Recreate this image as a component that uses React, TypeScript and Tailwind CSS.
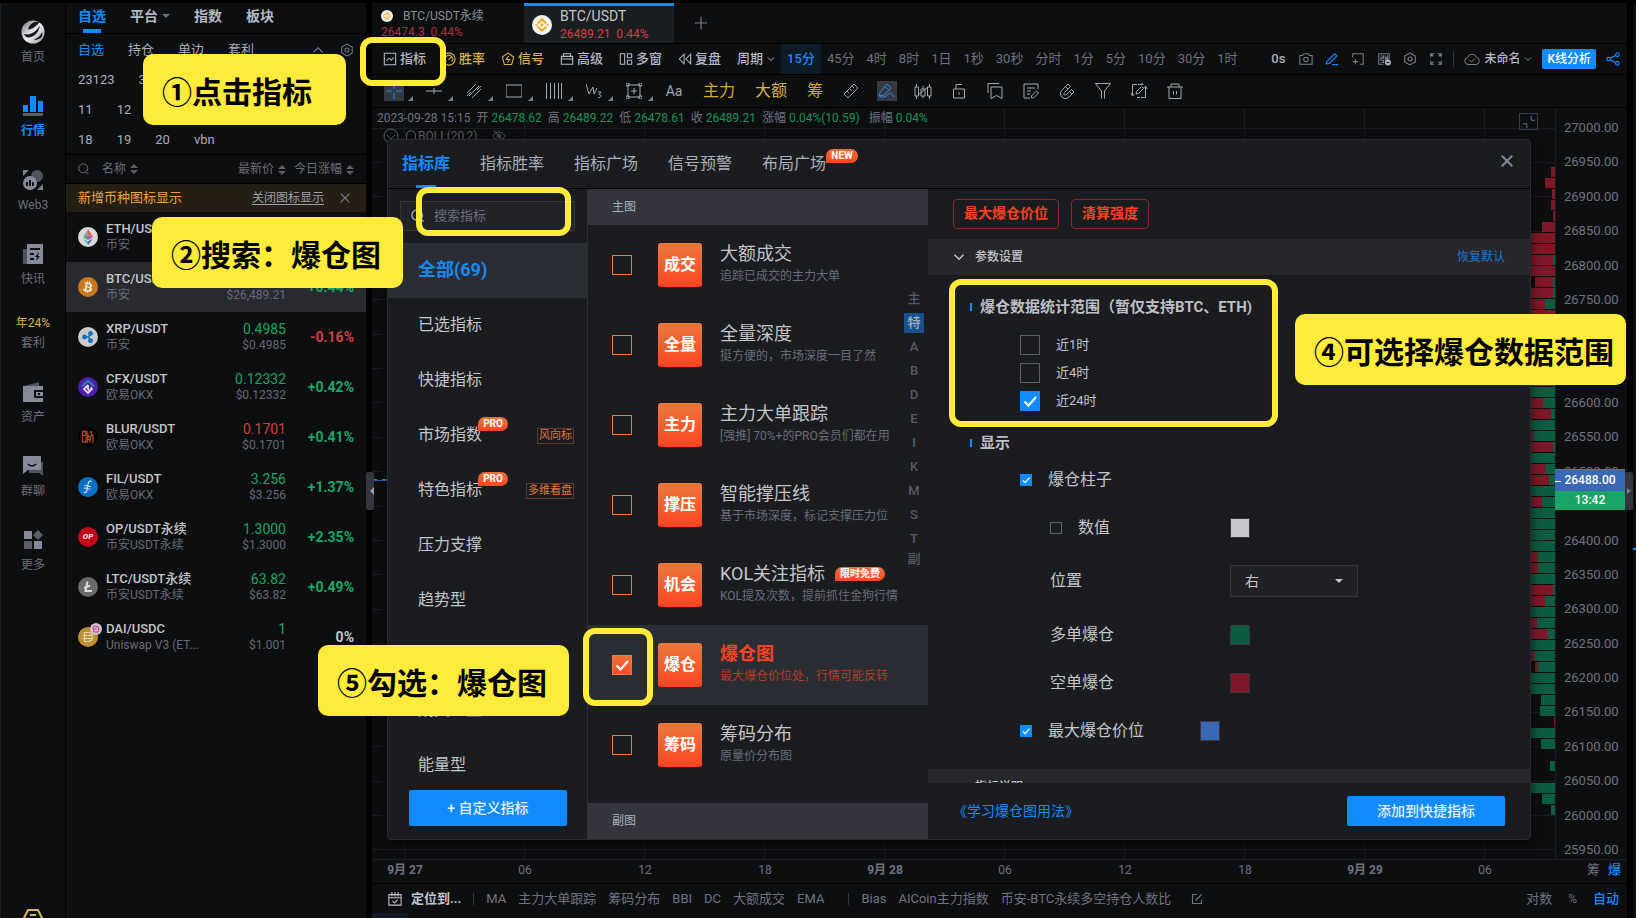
import React from "react";
import { FaBtc } from "react-icons/fa";

type Kids = { children?: React.ReactNode };

function Ico({ s = 16, c = "", w = 1, children }: Kids & { s?: number; c?: string; w?: number }) {
  return (
    <svg width={s} height={s} viewBox="0 0 16 16" fill="none" stroke="currentColor" strokeWidth={w} className={`shrink-0 ${c}`} aria-hidden="true">
      {children}
    </svg>
  );
}

function Chevron({ c = "", s = 10, w = 2 }: { c?: string; s?: number; w?: number }) {
  return <Ico s={s} c={c} w={w}><path d="M2 5l6 6 6-6" /></Ico>;
}

const HexIcon = () => (
  <>
    <path d="M8 1.2l6 3.4v6.8l-6 3.4-6-3.4V4.600z" />
    <circle cx="8" cy="8" r="2.300" />
  </>
);

function Tick({ size, label, checked, tone = "blue" }: { size: "lg" | "sm"; label?: string; checked?: boolean; tone?: "blue" | "orange" }) {
  const dim = size === "lg" ? "size-5" : "size-3";
  const col =
    tone === "blue"
      ? "border-[#5c5e6b] checked:border-[#118bff] checked:bg-[#118bff]"
      : "border-[#ee7b3c] checked:bg-linear-to-b checked:from-[#ee6e39] checked:to-[#fb4a26]";
  return (
    <span className={`grid shrink-0 ${dim}`}>
      <input type="checkbox" defaultChecked={checked} aria-label={label} className={`peer col-start-1 row-start-1 appearance-none border ${dim} ${col}`} />
      <svg viewBox="0 0 20 20" className={`pointer-events-none invisible col-start-1 row-start-1 peer-checked:visible ${dim}`} fill="none" stroke="#fff" strokeWidth="2" aria-hidden="true">
        <path d="M4.500 10.500l4 4 7.500-8.500" />
      </svg>
    </span>
  );
}

/* ---------- left rail ---------- */

const railIcons: Record<string, React.ReactNode> = {
  首页: (
    <svg width="24" height="24" viewBox="0 0 26 26" aria-hidden="true">
      <defs>
        <linearGradient id="ball" x1="0" y1="0" x2="1" y2="1">
          <stop offset="0" stopColor="#6f6f73" />
          <stop offset="0.5" stopColor="#ededf0" />
          <stop offset="1" stopColor="#9a9a9e" />
        </linearGradient>
      </defs>
      <circle cx="13" cy="13" r="12.500" fill="url(#ball)" />
      <path d="M8 9c1-4 5-7 9-7.500 1 0 2 .5 2.500 1C18 6 13 9 10 10c-2 .5-2.500 0-2-1z" fill="#17181a" />
      <path d="M3.500 15c5 2 12-1 17-9-1 7-6 13-13 13-2 0-4-2-4-4z" fill="#17181a" />
      <path d="M14 21c4-1 7-4 9-8 .5 2 0 5-1 6-2 2-5 3-8 2z" fill="#17181a" />
    </svg>
  ),
  行情: (
    <svg width="20" height="20" viewBox="0 0 20 20" aria-hidden="true">
      <path d="M0 9h5v7H0zM7 0h6v16H7zM15 5h5v11h-5z" fill="#118bff" />
      <path d="M0 17h20v3H0z" fill="#5b5e68" />
    </svg>
  ),
  Web3: (
    <svg width="20" height="20" viewBox="0 0 20 20" aria-hidden="true">
      <circle cx="14" cy="6" r="6" fill="#4f535d" />
      <path d="M0 0h6L0 6zM20 20h-6l6-6z" fill="#7b8093" />
      <circle cx="7" cy="13" r="7" fill="#868b9c" />
      <path d="M3 12h2v4H3zM6 10h2v6H6zM9 12h2v4H9z" fill="#17181a" />
    </svg>
  ),
  快讯: (
    <svg width="20" height="20" viewBox="0 0 20 20" aria-hidden="true">
      <path d="M0 5h4v15H0z" fill="#4f535d" />
      <path d="M4 0h16v20H4z" fill="#868b9c" />
      <path d="M7 5h10M7 10h4M7 15h4" stroke="#0d0e10" strokeWidth="2" />
      <path d="M16 8l-4 5h2l-1 4 4-5h-2z" fill="#0d0e10" />
    </svg>
  ),
  资产: (
    <svg width="20" height="20" viewBox="0 0 20 20" aria-hidden="true">
      <path d="M1 4L16 0v4z" fill="#4f535d" />
      <path d="M0 4h20v16H0z" fill="#868b9c" />
      <path d="M11 8h9v8h-9z" fill="#0d0e10" />
      <path d="M13 10h7v4h-7z" fill="#868b9c" />
      <path d="M15 11h2v2h-2z" fill="#0d0e10" />
    </svg>
  ),
  群聊: (
    <svg width="20" height="20" viewBox="0 0 20 20" aria-hidden="true">
      <path d="M6 6h14v14l-4-3H6z" fill="#4f535d" />
      <path d="M0 0h18v14H5l-5 4z" fill="#868b9c" />
      <path d="M5 8c2 2.500 6 2.500 8 0" stroke="#0d0e10" strokeWidth="1.500" fill="none" />
    </svg>
  ),
  更多: (
    <svg width="24" height="24" viewBox="-2 -2 24 24" aria-hidden="true">
      <path d="M1 1h8v8H1zM11 11h8v8h-8z" fill="#868b9c" />
      <path d="M1 11h8v8H1zM15 0l5 5-5 5-5-5z" fill="#5b5e68" />
    </svg>
  ),
};

const rail = ["首页", "行情", "Web3", "快讯", "套利", "资产", "群聊", "更多"];

function Rail() {
  return (
    <nav className="flex w-[65px] shrink-0 flex-col items-center border-l border-[#1c2029] bg-[#0d0e10] pt-4">
      {rail.map((n) => (
        <a key={n} href="#" className={`flex w-full shrink-0 flex-col items-center text-xs leading-5 ${n === "套利" ? "h-16" : "h-[74px]"} ${n === "行情" ? "font-bold text-[#118bff]" : "text-[#6a6e7d]"}`}>
          {n === "套利" ? (
            <span className="mb-[2px] leading-4 text-[#d9b44a]">年24%</span>
          ) : (
            <span className="mb-[2px] flex h-[26px] items-center">{railIcons[n]}</span>
          )}
          {n}
        </a>
      ))}
      <span className="mt-auto h-[9px] overflow-hidden">
        <svg width="20" height="20" viewBox="0 0 20 20" fill="none" stroke="#dcb25c" strokeWidth="2" aria-hidden="true">
          <path d="M5 1h10l4 8-4 8H5L1 9zM7 6h6" />
        </svg>
      </span>
    </nav>
  );
}

/* ---------- watch list ---------- */

function Coin({ k }: { k: string }) {
  const wrap = (bg: string, inner: React.ReactNode) => (
    <svg width="20" height="20" viewBox="0 0 20 20" aria-hidden="true">
      <circle cx="10" cy="10" r="10" fill={bg} />
      {inner}
    </svg>
  );
  switch (k) {
    case "ETH":
      return wrap("#d9d9dc", <>
        <path d="M10 2L5 10l5-2z" fill="#8a9be0" /><path d="M10 2l5 8-5-2z" fill="#e0603c" />
        <path d="M5 10l5-2v5z" fill="#4aa96a" /><path d="M15 10l-5-2v5z" fill="#b356a8" />
        <path d="M5 11.500l5 3V18z" fill="#3ab4c8" /><path d="M15 11.500l-5 3V18z" fill="#3f62b8" />
      </>);
    case "BTC":
      return (
        <span className="flex size-5 items-center justify-center rounded-full bg-[#c9771d] text-[#e8e4dc]">
          <FaBtc size={12} className="rotate-12" />
        </span>
      );
    case "XRP":
      return wrap("#c9cacc", <>
        <path d="M6.500 10h4l2.500-4M10.500 10l2.500 4" stroke="#1173b8" strokeWidth="1.500" fill="none" />
        <circle cx="6.500" cy="10" r="2.400" fill="#1173b8" /><circle cx="12.500" cy="6.500" r="2.400" fill="#1173b8" /><circle cx="12.500" cy="13.700" r="2.400" fill="#1173b8" />
      </>);
    case "CFX":
      return wrap("#4d1fb0", <>
        <path d="M4 9.500l6-6 6 6" stroke="#2f7fa8" strokeWidth="2" fill="none" />
        <path d="M10 8l-4 4 4 4 4-4-1.500-1.500M10 8v4l2 2" stroke="#dcdce6" strokeWidth="1.800" fill="none" />
      </>);
    case "BLUR":
      return wrap("#050505", <path d="M4.500 4.500h3.500v4H4.500zM9 4v4.500h2.500M4.500 10v5h3.500v-5M9.500 15.500V10h3v2.500H9.500M12 12.500v3M12 5h1.500v3.500H15V16" stroke="#b5431c" strokeWidth="1.300" fill="none" />);
    case "FIL":
      return wrap("#0a70c4", <path d="M13.500 4.500c-2-1-3 0-3.500 3l-1.200 6c-.4 2-1.300 2.600-3 1.800M6.500 8.500l6.500 1M6 11l6.500 1" stroke="#d5e2ee" strokeWidth="1.200" fill="none" />);
    case "OP":
      return (
        <span className="flex size-5 items-center justify-center rounded-full bg-[#c1071c] text-[8px] font-black italic leading-none text-[#e6dadb]">OP</span>
      );
    case "LTC":
      return wrap("#69696b", <path d="M9.500 4.500L7.500 14H14M6 11l6-2.500" stroke="#dadadb" strokeWidth="2" fill="none" />);
    default:
      return (
        <svg width="24" height="24" viewBox="0 0 24 24" className="-mt-1 overflow-visible" aria-hidden="true">
          <circle cx="10" cy="14" r="10" fill="#bd9130" />
          <path d="M6.500 9.500h3.500c6 0 6 9 0 9H6.500zM5 12.500h10M5 15.500h10" stroke="#e3d6b6" strokeWidth="1.200" fill="none" />
          <circle cx="18" cy="6" r="6" fill="#cfc3cb" />
          <path d="M15 4l2-1 3 1 1 3-1 2h-4zM16 6h3" stroke="#d6368a" strokeWidth="1" fill="none" />
        </svg>
      );
  }
}

const coins = [
  ["ETH", "ETH/USDT", "币安", "", "", "", "g"],
  ["BTC", "BTC/USDT", "币安", "26489.21", "26,489.21", "+0.44%", "g"],
  ["XRP", "XRP/USDT", "币安", "0.4985", "0.4985", "-0.16%", "g"],
  ["CFX", "CFX/USDT", "欧易OKX", "0.12332", "0.12332", "+0.42%", "g"],
  ["BLUR", "BLUR/USDT", "欧易OKX", "0.1701", "0.1701", "+0.41%", "r"],
  ["FIL", "FIL/USDT", "欧易OKX", "3.256", "3.256", "+1.37%", "g"],
  ["OP", "OP/USDT永续", "币安USDT永续", "1.3000", "1.3000", "+2.35%", "g"],
  ["LTC", "LTC/USDT永续", "币安USDT永续", "63.82", "63.82", "+0.49%", "g"],
  ["DAI", "DAI/USDC", "Uniswap V3 (ET...", "1", "1.001", "0%", "g"],
];

function Sort() {
  return (
    <svg width="8" height="10" viewBox="0 0 8 10" fill="#5c5f69" className="ml-1 inline-block" aria-hidden="true">
      <path d="M4 0l4 4H0zM4 10l4-4H0z" />
    </svg>
  );
}

function WatchList() {
  return (
    <section className="flex w-[300px] shrink-0 flex-col bg-[#0d0e10]">
      <div className="flex h-[31px] shrink-0 gap-6 border-b border-black pl-3 text-sm font-bold leading-[26px] text-[#b4b9c4]">
        <button className="relative pb-1 text-[#118bff]">
          自选
          <span className="absolute bottom-0 left-[5px] h-1 w-[18px] bg-[#118bff]" />
        </button>
        <button className="flex items-center gap-1 pb-1">
          平台
          <svg width="8" height="4" viewBox="0 0 8 4" fill="#6d7180" aria-hidden="true"><path d="M0 0h8L4 4z" /></svg>
        </button>
        <button className="pb-1">指数</button>
        <button className="pb-1">板块</button>
      </div>
      <div className="h-[121px] shrink-0 border-b border-black pl-3 pt-px text-[13px] leading-[30px] text-[#a9adb9]">
        <div className="flex gap-6">
          <button className="text-[#118bff]">自选</button>
          <button>持仓</button>
          <button>单边</button>
          <button>套利</button>
          <span className="ml-auto flex items-center gap-4 pr-3 text-[#747887]">
            <Ico s={12} w={1.500}><path d="M2 11l6-6 6 6" /></Ico>
            <Ico s={14} w={1.200}><HexIcon /></Ico>
          </span>
        </div>
        <div className="flex gap-6"><button>23123</button><button>3</button></div>
        <div className="flex gap-6"><button>11</button><button>12</button></div>
        <div className="flex gap-6"><button>18</button><button>19</button><button>20</button><button>vbn</button></div>
      </div>
      <table className="w-full table-fixed border-separate border-spacing-0">
        <colgroup><col /><col className="w-[80px]" /><col className="w-[80px]" /></colgroup>
        <thead>
          <tr className="h-[29px] text-xs text-[#6a6e7d]">
            <th className="border-b border-black p-0 pl-3 text-left font-normal">
              <span className="flex items-center">
                <Ico s={12} c="mr-3" w={1.300}><circle cx="7" cy="7" r="6" /><path d="M11 12l3 3" /></Ico>
                名称<Sort />
              </span>
            </th>
            <th className="whitespace-nowrap border-b border-black p-0 text-right font-normal">最新价<Sort /></th>
            <th className="whitespace-nowrap border-b border-black p-0 pr-3 text-right font-normal">今日涨幅<Sort /></th>
          </tr>
        </thead>
        <tbody>
          <tr className="h-7 bg-[#251e15]">
            <td colSpan={3} className="px-3 py-0">
              <span className="flex items-center text-[13px] leading-7 text-[#f0a243]">
                新增币种图标显示
                <button className="ml-auto text-xs text-[#9c9fa9] underline underline-offset-2">关闭图标显示</button>
                <button aria-label="关闭" className="ml-4 mr-1 text-[#7c7e85]">
                  <Ico s={10} w={1.800}><path d="M1 1l14 14M15 1L1 15" /></Ico>
                </button>
              </span>
            </td>
          </tr>
          {coins.map(([k, name, ex, price, usd, pct, tone]) => (
            <tr key={k} className={`h-[50px] ${k === "BTC" ? "bg-[#282a30]" : ""}`}>
              <td className="p-0 pl-3">
                <span className="flex items-center gap-2">
                  <span className="size-5 shrink-0"><Coin k={k} /></span>
                  <span className="whitespace-nowrap">
                    <span className="block text-[13px] font-medium leading-4 text-[#c3c5c9]">{name}</span>
                    <span className="block text-xs leading-4 text-[#666a78]">{ex}</span>
                  </span>
                </span>
              </td>
              <td className="whitespace-nowrap p-0 text-right">
                <span className={`block text-sm leading-4 ${tone === "r" ? "text-[#d23f42]" : "text-[#1aa566]"}`}>{price}</span>
                <span className="block text-xs leading-4 text-[#666a78]">{usd && `$${usd}`}</span>
              </td>
              <td className={`p-0 pr-3 text-right text-sm font-bold ${pct[0] === "-" ? "text-[#d23f42]" : pct[0] === "+" ? "text-[#1aa566]" : "text-[#c3c5c9]"}`}>{pct}</td>
            </tr>
          ))}
        </tbody>
      </table>
    </section>
  );
}

/* ---------- top bars ---------- */

function Binance({ s }: { s: number }) {
  return (
    <svg width={s} height={s} viewBox="0 0 20 20" className="shrink-0" aria-hidden="true">
      <circle cx="10" cy="10" r="10" fill="#f4f4f4" />
      <path d="M5.700 8.500L10 4.200l4.300 4.300M5.700 11.500L10 15.800l4.300-4.300" stroke="#f5ac1d" strokeWidth="2" fill="none" />
      <path d="M10 8.200l1.800 1.800-1.800 1.800L8.200 10zM4.500 8.700L5.800 10l-1.300 1.300L3.200 10zM15.500 8.700l1.300 1.300-1.300 1.300-1.300-1.300z" fill="#f5ac1d" />
    </svg>
  );
}

const menus: [string, boolean, React.ReactNode][] = [
  ["指标", false, <><path d="M1.500 1.500h13v13h-13zM4 10l3-3 2.500 2.500L12.500 6" /></>],
  ["胜率", true, <><circle cx="8" cy="8" r="7" /><path d="M5 11a4.200 4.200 0 1 1 6 0M7.500 9l3.500-3.500" /></>],
  ["信号", true, <><path d="M8 1.200l6.500 4.500-2.300 8.500H3.800L1.500 5.700z" /><path d="M8.800 4.500L6 8.500h4L7.500 12" /></>],
  ["高级", false, <path d="M1.500 5h13v9h-13zM4 5V2h8v3M1.500 8h13" />],
  ["多窗", false, <path d="M1.500 2h5v12h-5zM9.500 2h5v4.500h-5zM9.500 9.500h5V14h-5z" />],
  ["复盘", false, <path d="M7 2.500v11L1.500 8zM14.500 2.500v11L9 8z" />],
];

const periods = ["15分", "45分", "4时", "8时", "1日", "1秒", "30秒", "分时", "1分", "5分", "10分", "30分", "1时"];

function Toolbar() {
  return (
    <div className="flex h-[31px] shrink-0 items-center whitespace-nowrap border-b border-black pl-[11px] pr-[7px] text-[13px] text-[#b4b9c6]">
      {menus.map(([t, gold, icon]) => (
        <button key={t} className={`mr-4 flex items-center gap-[3px] font-medium ${gold ? "text-[#dcb04e]" : ""}`}>
          <Ico s={14} w={1.200}>{icon}</Ico>{t}
        </button>
      ))}
      <button className="mr-[6px] flex items-center gap-1 font-medium">周期<Chevron s={8} w={2} /></button>
      <div className="flex h-full">
        {periods.map((p) => (
          <button key={p} className={`px-[6px] ${p === "15分" ? "bg-[#0e1b28] font-medium text-[#118bff]" : "text-[#6d717f]"}`}>{p}</button>
        ))}
      </div>
      <div className="ml-auto flex items-center gap-[10px] text-[#7a7e8c]">
        <span className="flex items-center gap-3">
          <span className="mr-[2px] font-medium text-[#a9adb9]">0s</span>
          <Ico s={14} w={1.200}><path d="M1 4h3l1.500-2h5L12 4h3v10H1z" /><circle cx="8" cy="8.500" r="2.600" /></Ico>
          <Ico s={14} c="text-[#118bff]" w={1.300}><path d="M2 11L11 2l2.500 2.500L5 13l-3.500.5zM8 14.500h7" /></Ico>
          <Ico s={14} w={1.200}><path d="M2 6V2h12v12h-4M5 8v6M2 11h6" /></Ico>
          <Ico s={14} w={1.200}><path d="M14 8V2H2v12h5M4 4.500h3.500v2.500H4.500V9.500H7.500V12H5M9.500 4v1M12 4v1M9.500 6h3v3h-3zM11 6v5" /><circle cx="12.500" cy="12" r="3.500" fill="#a9adb9" stroke="none" /><path d="M11 12h3" stroke="#0d0e10" /></Ico>
          <Ico s={14} w={1.300}><HexIcon /></Ico>
          <Ico s={14} w={1.300}><path d="M2 6V2h4M2 2l3 3M10 2h4v4M14 2l-3 3M14 10v4h-4M14 14l-3-3M6 14H2v-4M2 14l3-3" /></Ico>
        </span>
        <span className="h-4 w-px bg-[#33363e]" />
        <span className="flex items-center gap-1 text-xs font-medium text-[#b4b9c6]">
          <Ico s={16} c="text-[#7a7e8c]"><path d="M4 13.500a3.500 3.500 0 0 1-.5-6.900 4.700 4.700 0 0 1 9-.2 3.600 3.600 0 0 1-.5 7.100zM5.500 9l2 2 3.500-3.500" /></Ico>
          未命名
          <Chevron s={8} c="text-[#7a7e8c]" w={2} />
        </span>
        <button className="h-5 rounded-xs bg-[#118bff] px-[5px] text-xs font-medium text-white">K线分析</button>
        <Ico s={14} c="text-[#118bff]" w={1.300}><circle cx="3" cy="8" r="2" /><circle cx="13" cy="3" r="2" /><circle cx="13" cy="13" r="2" /><path d="M5 7l6-3M5 9l6 3" /></Ico>
      </div>
    </div>
  );
}

const drawTools: React.ReactNode[] = [
  <path d="M8 0v6M8 10v6M0 8h6M10 8h6" />,
  <path d="M0 8h16M8 5v6" />,
  <path d="M1 10L10 1M3 13L13 3M6 15L15 6M1 13l4-4M11 7l4-4" />,
  <path d="M0 2h16v12H0z" />,
  <path d="M.5 0v16M4.500 0v16M8.500 0v16M12.500 0v16M15.500 0v16" />,
  <path d="M0 1l3 10 4-7 1 7 3-6M12 9h3l-2 2.500c3 0 2.500 3.500-1 3" />,
  <path d="M2 2h12v12H2zM8 5v6M5 8h6M0 0h3v3H0zM13 13h3v3h-3zM13 0h3v3h-3zM0 13h3v3H0z" />,
];

const editTools: React.ReactNode[] = [
  <path d="M1 11L11 1l4 4L5 15zM4 8l2 2M6.500 5.500l2 2M9 3l2 2" />,
  <path d="M0 13L1.500 8.500 8 1l4 4-6.500 7L0 13l2 1h3c3 0 4-4 6.500-4s0 4.500 4.500 3M6 3.500l4 4" />,
  <path d="M0 4h3.500v9H0zM1.500 1v3M1.500 13v3M6 6h4v7H6zM8 3v3M8 13v2M12.500 4H16v9h-3.500zM14.500 1v3M14.500 13v3M3 12L13 4" />,
  <path d="M2.500 6h11v9h-11zM5 6V1.500h6M8 9v3" />,
  <path d="M1 10V.5h11M4 4h11v11.500l-5.500-3-5.500 3z" />,
  <path d="M15 6V1H1v14h6M4 5h8M4 8h4M4 11h3M8.500 13l5-5 2 2-5 5h-2z" />,
  <path d="M3 7l6-6 2.500 2.500-6 6c-1.500 2 .5 3.500 2 2l5-5L15 9l-5 5c-5 4.500-11.500-2-7-7zM6.500 3.500L9 6M10.500 8.500L13 11" />,
  <path d="M0 .5h15.500L9.500 8v7.500M6.500 15.500V8L.5 .5" />,
  <path d="M6 1.500H1.500V12M0 10l1.500 3 2-2M10 14.500h4.500V4M16 6l-1.500-3-2 2M6 14.500h3M7 1.500h5l-1.500-1.500M5 11l.5-2.500 5-5 2 2-5 5z" />,
  <path d="M0 4h16M4 4V1h8v3M2 4v11.500h12V4M6.500 8v3.500M9.500 8v3.500" />,
];

function DrawBar() {
  return (
    <div className="flex h-[33px] shrink-0 items-center border-b border-black pl-3 text-[#a3a8b4]">
      {drawTools.map((d, i) => (
        <button key={i} aria-label={`绘图 ${i + 1}`} className="flex w-10 items-end gap-1">
          <span className={`flex size-5 items-center justify-center ${i === 0 ? "bg-[#363842] text-[#118bff]" : ""}`}><Ico>{d}</Ico></span>
          <svg width="5" height="5" viewBox="0 0 5 5" fill="#7a7e8c" aria-hidden="true"><path d="M5 0v5H0z" /></svg>
        </button>
      ))}
      <button className="w-5 text-sm">Aa</button>
      <button className="ml-[19px] text-base text-[#d5a82c]">主力</button>
      <button className="ml-5 text-base text-[#dcb04e]">大额</button>
      <button className="ml-5 mr-[2px] text-base text-[#d5a82c]">筹</button>
      {editTools.map((d, i) => (
        <button key={i} aria-label={`编辑 ${i + 1}`} className={`ml-4 flex size-5 items-center justify-center ${i === 1 ? "bg-[#363842] text-[#2f86dd]" : ""}`}>
          <Ico c="overflow-visible">{d}</Ico>
        </button>
      ))}
    </div>
  );
}

/* ---------- chart ---------- */

const R = "#7e1828";
const G = "#0c5c41";
/* [red width, green width] for each price step, from the top */
const bars = [
  [4, 0], [10, 0], [3, 0], [4, 0], [2, 0], [13, 0], [40, 0], [40, 0], [40, 2], [40, 0], [18, 2], [40, 2], [40, 10], [40, 0],
  [0, 40], [0, 40], [0, 40], [0, 40], [0, 40], [0, 40], [0, 40], [40, 12], [40, 4], [0, 40], [40, 22], [40, 2], [0, 40], [40, 9],
  [40, 6], [0, 40], [40, 13], [0, 40], [0, 40], [0, 40], [0, 40], [40, 17], [40, 17], [0, 40], [40, 2], [40, 10], [0, 40],
  [40, 18], [40, 8], [0, 40], [40, 21], [3, 17], [0, 40], [0, 40], [0, 14], [0, 15], [1, 0], [0, 40], [0, 14], [0, 0], [0, 5],
  [0, 0], [0, 40], [0, 13], [0, 4],
];
const prices = Array.from({ length: 22 }, (_, i) => 27000 - i * 50);
const dates = ["9月 27", "06", "12", "18", "9月 28", "06", "12", "18", "9月 29", "06"];

function Chart() {
  return (
    <div className="relative flex min-h-0 flex-1 flex-col overflow-hidden">
      <div className="flex min-h-0 flex-1 border-b border-[#1d1f22]">
        <div className="relative min-w-0 flex-1 border-r border-[#1d1f22]">
          <svg className="absolute inset-0 size-full" aria-hidden="true">
            {prices.map((p, i) => <path key={p} d={`M0 ${Math.round(20.500 + i * 34.370) - 0.500}H2000`} stroke="#191b1e" />)}
            {dates.map((_, i) => <path key={i} d={`M${32.500 + i * 120} 0V1200`} stroke="#191b1e" />)}
            <path d="M0 372.500H2000" stroke="#2c62b5" />
            <path d="M0 371.500H2000" stroke="#1aa566" strokeDasharray="5 5" />
          </svg>
          <svg width="48" className="absolute right-0 top-0 h-full" aria-hidden="true">
            {bars.map(([r, g], i) => (
              <g key={i}>
                <rect x={48 - r - g} y={59 + i * 11} width={r} height="10" fill={R} />
                <rect x={48 - g} y={59 + i * 11} width={g} height="10" fill={G} />
              </g>
            ))}
          </svg>
          <div className="relative flex h-5 items-center gap-[6px] whitespace-nowrap pl-[5px] text-xs text-[#6f7381]">
            <span>2023-09-28 15:15</span>
            {[["开", "26478.62"], ["高", "26489.22"], ["低", "26478.61"], ["收", "26489.21"], ["涨幅", "0.04%(10.59)"], ["振幅", "0.04%"]].map(([a, b]) => (
              <span key={a} className="flex gap-[3px] last:ml-[3px]"><span>{a}</span><span className="text-[#159259]">{b}</span></span>
            ))}
          </div>
          <div className="relative flex h-4 items-center gap-[6px] pl-[11px] text-xs text-[#5b5e69]">
            <Ico s={16}><circle cx="8" cy="8" r="7" /><path d="M4 7l4 4 4-4" /></Ico>
            <Ico s={14} c="-ml-px" w={1.200}><path d="M1 13h14M3 13V7a5 5 0 0 1 10 0v6" /></Ico>
            <span className="-ml-[6px]">BOLL(20,2)</span>
            <Ico s={14} c="ml-2"><path d="M1 8c3-6 11-6 14 0-3 6-11 6-14 0zM2 1l12 14" /><circle cx="8" cy="8" r="2" /></Ico>
          </div>
          <span className="absolute right-[17px] top-[5px] flex h-[17px] w-[19px] items-center justify-center border border-[#3a3859] text-[#777b88]">
            <Ico s={14}><path d="M10.500 1v5H15M1 10h4.500v5" /></Ico>
          </span>
        </div>
        <div className="flex w-[71px] shrink-0 flex-col justify-between pl-[8px] pt-[11px] text-[13px] leading-[18px] text-[#6f7381]">
          {prices.map((p) => <span key={p}>{p}.00</span>)}
        </div>
      </div>
      <div className="flex h-6 shrink-0 items-center border-b border-black pb-[3px] text-xs text-[#6f7381]">
        {dates.map((d, i) => (
          <span key={i} className={`shrink-0 text-center ${i === 0 ? "mr-[27px] w-[66px]" : "w-[120px]"} ${d.length > 2 ? "font-bold" : ""}`}>{d}</span>
        ))}
        <span className="ml-auto flex shrink-0 gap-2 pr-[6px] text-[13px]"><button>筹</button><button className="font-medium text-[#118bff]">爆</button></span>
      </div>
      <div className="absolute right-[2px] top-[361px] w-[70px] border-t border-[#1aa566] text-center text-xs font-medium text-white">
        <div className="relative h-[21px] bg-[#3a68b4] leading-[21px]">26488.00<span className="absolute left-0 top-[11px] h-px w-[6px] bg-white" /></div>
        <div className="h-[19px] bg-[#1aa566] leading-[19px]">13:42</div>
      </div>
      <IndicatorDialog />
    </div>
  );
}

/* ---------- indicator dialog ---------- */

function Pill({ c = "", children }: Kids & { c?: string }) {
  return <span className={`h-[14px] rounded-[7px] rounded-bl-none bg-linear-to-b from-[#ec7039] to-[#fd4322] text-center text-[10px] font-bold leading-[14px] text-white ${c}`}>{children}</span>;
}

const groups: [string, boolean, string][] = [
  ["已选指标", false, ""], ["快捷指标", false, ""], ["市场指数", true, "风向标"], ["特色指标", true, "多维看盘"], ["压力支撑", false, ""],
  ["趋势型", false, ""], ["摆动型", false, ""], ["成交量型", false, ""], ["能量型", false, ""],
];

const indicators = [
  ["成交", "大额成交", "追踪已成交的主力大单"],
  ["全量", "全量深度", "挺方便的，市场深度一目了然"],
  ["主力", "主力大单跟踪", "[强推] 70%+的PRO会员们都在用"],
  ["撑压", "智能撑压线", "基于市场深度，标记支撑压力位"],
  ["机会", "KOL关注指标", "KOL提及次数，提前抓住金狗行情"],
  ["爆仓", "爆仓图", "最大爆仓价位处，行情可能反转"],
  ["筹码", "筹码分布", "原量价分布图"],
];

function Swatch({ c, name }: { c: string; name: string }) {
  return <button aria-label={name} className={`size-5 border border-[#36373e] ${c}`} />;
}

function SubTitle({ children, c = "" }: Kids & { c?: string }) {
  return (
    <h3 className={`flex h-5 items-center gap-2 pl-[42px] text-[15px] font-bold leading-5 text-[#bcbfc5] ${c}`}>
      <span className="h-2 w-[2px] bg-[#118bff]" />{children}
    </h3>
  );
}

function IndicatorDialog() {
  return (
    <div role="dialog" aria-label="指标库" className="absolute bottom-[44px] left-[15px] right-[96px] top-[31px] flex flex-col overflow-hidden rounded border border-[#2a2c31] bg-[#1b1c20] text-[#c3c5c9] shadow-[0_4px_12px_rgba(0,0,0,0.6)]">
      <div className="flex h-[49px] shrink-0 gap-[30px] border-b border-black pl-[14px] text-base leading-[46px] text-[#a9b0bc]">
        <button className="relative font-bold text-[#118bff]">
          指标库
          <span className="absolute bottom-0 left-[14px] h-[3px] w-5 bg-[#118bff]" />
        </button>
        <button>指标胜率</button>
        <button>指标广场</button>
        <button>信号预警</button>
        <button className="flex pt-px">布局广场<Pill c="mt-2 w-8">NEW</Pill></button>
        <button aria-label="关闭" className="mb-[6px] ml-auto mr-[17px] text-[#868b9c]"><Ico s={12} w={2.500}><path d="M1 1l14 14M15 1L1 15" /></Ico></button>
      </div>
      <div className="flex min-h-0 flex-1">
        <div className="flex w-[200px] shrink-0 flex-col border-r border-[#2f3037]">
          <label className="mx-3 mt-3 flex h-[30px] shrink-0 items-center border border-[#33343b] bg-[#212227] pl-[10px] text-[#a9b0bc]">
            <Ico s={14} w={1.500}><circle cx="7" cy="7" r="6" /><path d="M11.500 11.500l3 3" /></Ico>
            <input type="text" placeholder="搜索指标" className="ml-[9px] w-full bg-transparent text-[13px] outline-none placeholder:text-[#6a6e7d]" />
          </label>
          <div className="mt-3 min-h-0 flex-1 overflow-hidden text-base">
            <button className="block h-[55px] w-full bg-[#2b2d34] pb-[2px] pl-[30px] text-left text-lg font-bold text-[#118bff]">全部(69)</button>
            {groups.map(([g, pro, tag]) => (
              <button key={g} className="flex h-[55px] w-full items-center pb-[2px] pl-[30px] pr-[13px] text-left">
                {g}
                {pro && <Pill c="-ml-1 mb-[22px] w-[30px]">PRO</Pill>}
                {tag && <span className="ml-auto mt-[2px] border border-[#5f3a2c] px-[1px] text-[11px] leading-[14px] text-[#e0743c]">{tag}</span>}
              </button>
            ))}
          </div>
          <div className="h-[49px] shrink-0 pl-[21px] pr-5">
            <button className="h-9 w-full rounded-xs bg-[#118bff] text-sm font-medium text-[#e3effc]">+ 自定义指标</button>
          </div>
        </div>
        <div className="relative w-[340px] shrink-0 overflow-hidden">
          <h2 className="h-9 bg-[#34343d] pl-6 text-xs leading-9 text-[#a9b0bc]">主图</h2>
          <ul className="mb-[18px]">
            {indicators.map(([badge, title, sub]) => {
              const on = badge === "爆仓";
              return (
                <li key={badge} className={`flex h-20 items-center whitespace-nowrap pl-6 ${on ? "bg-[#2b2d34]" : ""}`}>
                  <Tick size="lg" tone="orange" label={title} checked={on} />
                  <span className="ml-[26px] flex size-11 shrink-0 items-center justify-center rounded-[3px] bg-linear-to-b from-[#ea763b] to-[#ff4220] text-base font-bold text-white">{badge}</span>
                  <span className="ml-[18px]">
                    <span className={`flex items-center gap-[10px] text-lg leading-[22px] ${on ? "font-bold text-[#ff4322]" : ""}`}>
                      {title}{badge === "机会" && <Pill c="w-[50px]">限时免费</Pill>}
                    </span>
                    <span className={`mt-px block text-xs leading-[21px] ${on ? "text-[#b53a26]" : "text-[#686c7a]"}`}>{sub}</span>
                  </span>
                </li>
              );
            })}
          </ul>
          <h2 className="h-9 bg-[#34343d] pl-6 text-xs leading-9 text-[#a9b0bc]">副图</h2>
          <div className="absolute right-1 top-[98px] flex flex-col items-center text-[13px] font-medium leading-6 text-[#565a66]">
            {[..."主特ABDEIKMST"].map((l) => (
              <a key={l} href="#" className="flex h-6 items-center">
                <span className={`w-5 text-center leading-5 ${l === "特" ? "bg-[#17528f] text-[#a9b0bc]" : ""}`}>{l}</span>
              </a>
            ))}
            <a href="#" className="leading-4">副</a>
          </div>
        </div>
        <div className="flex min-w-0 flex-1 flex-col">
          <div className="min-h-0 flex-1 overflow-hidden">
            <div className="flex h-[50px] items-center gap-3 px-[25px] text-sm font-bold text-[#fb4120]">
              <button className="h-[30px] rounded border border-[#842c20] px-[10px] pb-[2px]">最大爆仓价位</button>
              <button className="h-[30px] rounded border border-[#842c20] px-[10px] pb-[2px]">清算强度</button>
            </div>
            <div className="flex h-9 items-center bg-[#27262b] px-[25px] text-xs font-medium">
              <Chevron s={12} c="mr-[10px]" />参数设置
              <a href="#" className="ml-auto font-normal text-[#1579d8]">恢复默认</a>
            </div>
            <SubTitle c="mt-[22px]">爆仓数据统计范围（暂仅支持BTC、ETH)</SubTitle>
            <div className="mt-[18px] flex flex-col gap-2 pl-[92px] text-[13px] leading-5">
              {["近1时", "近4时", "近24时"].map((t) => (
                <label key={t} className="flex items-center gap-4"><Tick size="lg" checked={t === "近24时"} />{t}</label>
              ))}
            </div>
            <SubTitle c="mt-[22px]">显示</SubTitle>
            <div className="mt-[3px] text-base">
              <label className="flex h-12 items-center gap-4 pl-[92px]"><Tick size="sm" checked />爆仓柱子</label>
              <div className="flex h-[47px] items-center pl-[122px]">
                <label className="flex w-[180px] items-center gap-4"><Tick size="sm" />数值</label>
                <Swatch c="bg-[#c5c7cd]" name="数值颜色" />
              </div>
              <div className="flex h-[60px] items-center pl-[122px]">
                <label htmlFor="side" className="w-[180px]">位置</label>
                <span className="grid h-8 w-32 items-center">
                  <select id="side" className="col-start-1 row-start-1 h-8 w-full appearance-none border border-[#36373e] bg-[#202126] pl-[14px] text-sm">
                    <option>右</option>
                    <option>左</option>
                  </select>
                  <svg width="8" height="4" viewBox="0 0 8 4" fill="#c3c5c9" className="pointer-events-none col-start-1 row-start-1 mr-[15px] justify-self-end" aria-hidden="true"><path d="M0 0h8L4 4z" /></svg>
                </span>
              </div>
              <div className="flex h-12 items-center pl-[122px]"><span className="w-[180px]">多单爆仓</span><Swatch c="bg-[#0c5c41]" name="多单爆仓颜色" /></div>
              <div className="flex h-12 items-center pl-[122px]"><span className="w-[180px]">空单爆仓</span><Swatch c="bg-[#7e1828]" name="空单爆仓颜色" /></div>
              <div className="flex h-12 items-center pl-[92px]">
                <label className="flex w-[180px] items-center gap-4"><Tick size="sm" checked />最大爆仓价位</label>
                <Swatch c="bg-[#3a68b4]" name="最大爆仓价位颜色" />
              </div>
            </div>
            <div className="mt-[14px] h-9 bg-[#27262b] pl-[47px] text-xs font-medium leading-9">指标说明</div>
          </div>
          <div className="flex h-14 shrink-0 items-center px-[25px] pb-px text-sm">
            <a href="#" className="text-[#118bff]">《学习爆仓图用法》</a>
            <button className="ml-auto h-[30px] w-[158px] rounded-xs bg-[#118bff] font-medium text-[#e3effc]">添加到快捷指标</button>
          </div>
        </div>
      </div>
    </div>
  );
}

/* ---------- page ---------- */

function BottomBar() {
  return (
    <div className="flex h-[29px] shrink-0 items-center gap-3 whitespace-nowrap pl-4 pr-2 text-[13px] text-[#6f7381]">
      <Ico s={14} c="-mr-[3px] text-[#c3c5c9]" w={1.200}><path d="M1 3h14v12H1zM1 6.500h14M4.500 0v5M8 0v5M11.500 0v5M5 10l2.500 2.500L11 9" /></Ico>
      <button className="font-bold text-[#c3c5c9]">定位到...</button>
      <span className="h-3 w-px bg-[#33363e]" />
      {["MA", "主力大单跟踪", "筹码分布", "BBI", "DC", "大额成交", "EMA"].map((t) => <button key={t}>{t}</button>)}
      <span className="ml-3 h-3 w-px bg-[#33363e]" />
      {["Bias", "AICoin主力指数", "币安-BTC永续多空持仓人数比"].map((t) => <button key={t}>{t}</button>)}
      <Ico s={12} c="ml-2" w={1.500}><path d="M8 2H2v12h12V9M6 10l8-8" /></Ico>
      <span className="ml-auto flex gap-4"><button>对数</button><button className="text-xs">%</button><button className="font-medium text-[#118bff]">自动</button></span>
    </div>
  );
}

function Note({ c, children }: Kids & { c: string }) {
  return <div className={`absolute flex h-[71px] items-center whitespace-nowrap rounded-[10px] bg-[#ffeb3b] pl-[19px] pt-[5px] text-[30px] font-bold text-black ${c}`}>{children}</div>;
}

const Ring = ({ c }: { c: string }) => <div className={`pointer-events-none absolute rounded-xl border-[6px] border-[#ffeb3b] ${c}`} />;

export default function App() {
  return (
    <div className="relative flex h-screen overflow-hidden bg-black pt-[3px] font-['Roboto','Noto_Sans_CJK_SC',sans-serif]">
      <Rail />
      <div className="w-px shrink-0" />
      <WatchList />
      <div className="relative w-[6px] shrink-0">
        <button aria-label="收起列表" className="absolute left-0 top-[469px] z-10 flex h-[38px] w-2 items-center justify-end rounded-xs bg-[#34353d]">
          <svg width="4" height="8" viewBox="0 0 4 8" fill="#9a9da8" aria-hidden="true"><path d="M4 0v8L0 4z" /></svg>
        </button>
      </div>
      <main className="flex min-w-0 flex-1 flex-col bg-[#0d0e10]">
        <div className="flex h-[41px] shrink-0 border-b border-black">
          <button className="w-[152px] pl-[9px] pt-[2px] text-left text-xs text-[#8a8e99]">
            <span className="flex items-center gap-[10px] leading-4"><Binance s={12} />BTC/USDT永续</span>
            <span className="block leading-4 text-[#a93336]">26474.3&nbsp; 0.44%</span>
          </button>
          <button className="flex w-[150px] items-center gap-2 border-t-[3px] border-[#118bff] bg-[#1a1e21] pl-2 pt-px text-left">
            <Binance s={20} />
            <span>
              <span className="block text-sm leading-[18px] text-[#c3c5c9]">BTC/USDT</span>
              <span className="block text-xs leading-[18px] text-[#d23f42]">26489.21&nbsp; 0.44%</span>
            </span>
          </button>
          <button aria-label="新建标签" className="ml-5 text-[#7a7e8c]"><Ico s={14} w={1.300}><path d="M8 1v14M1 8h14" /></Ico></button>
        </div>
        <Toolbar />
        <DrawBar />
        <Chart />
        <BottomBar />
        <div className="h-[5px] w-9 shrink-0 bg-[#0f1d2a]" />
      </main>
      <div className="relative w-[6px] shrink-0">
        <button aria-label="展开面板" className="absolute right-0 top-[469px] flex h-[38px] w-2 items-center rounded-xs bg-[#34353d] pl-[2px]">
          <svg width="4" height="6" viewBox="0 0 4 6" fill="#7a7e8c" aria-hidden="true"><path d="M0 0v6l4-3z" /></svg>
        </button>
      </div>
      <aside className="w-[3px] shrink-0 bg-[#0d0e10] pt-[545px]"><div className="h-[2px] bg-[#118bff]" /></aside>

      <Ring c="left-[360px] top-[37px] h-[49px] w-[86px]" />
      <Ring c="left-[416px] top-[187px] h-[49px] w-[155px]" />
      <Ring c="left-[949px] top-[279px] h-[148px] w-[329px]" />
      <Ring c="left-[583px] top-[628px] h-[78px] w-[70px]" />
      <Note c="left-[143px] top-[54px] w-[203px]">①点击指标</Note>
      <Note c="left-[152px] top-[217px] w-[251px]">②搜索：爆仓图</Note>
      <Note c="left-[1295px] top-[314px] w-[331px]">④可选择爆仓数据范围</Note>
      <Note c="left-[318px] top-[645px] w-[251px]">⑤勾选：爆仓图</Note>
    </div>
  );
}
